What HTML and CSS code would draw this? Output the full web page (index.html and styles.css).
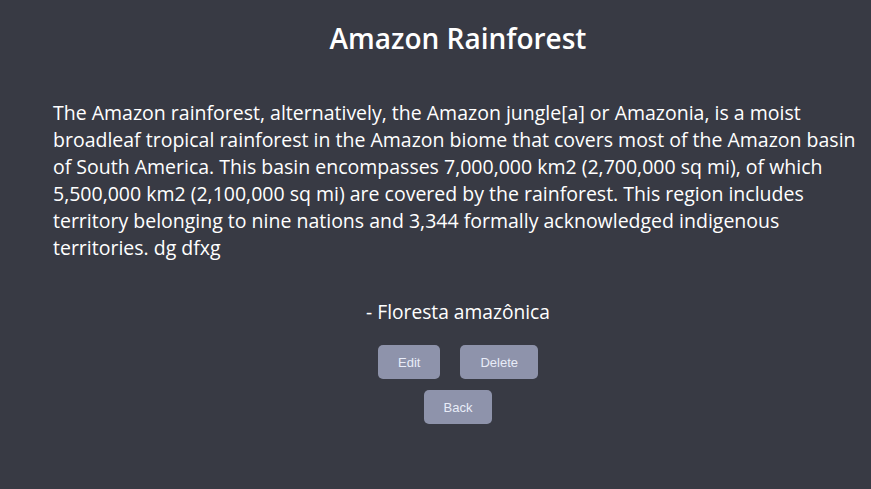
FILE: index.html
```html
<!DOCTYPE html>
<html lang="en">
<head>
<meta charset="utf-8">
<title>Amazon Rainforest</title>
<link rel="stylesheet" href="styles.css">
</head>
<body>
<main class="page">
  <h1 class="title">Amazon Rainforest</h1>
  <p class="content">The Amazon rainforest, alternatively, the Amazon jungle[a] or Amazonia, is a moist broadleaf tropical rainforest in the Amazon biome that covers most of the Amazon basin of South America. This basin encompasses 7,000,000 km2 (2,700,000 sq mi), of which 5,500,000 km2 (2,100,000 sq mi) are covered by the rainforest. This region includes territory belonging to nine nations and 3,344 formally acknowledged indigenous territories. dg dfxg</p>
  <p class="author">- Floresta amazônica</p>
  <div class="actions">
    <button class="btn">Edit</button>
    <button class="btn">Delete</button>
  </div>
  <div class="actions">
    <button class="btn">Back</button>
  </div>
</main>
</body>
</html>
```
FILE: styles.css
```css
html, body {
  margin: 0;
  padding: 0;
  background: #383a44;
}
body {
  font-family: "Open Sans", "DejaVu Sans", sans-serif;
  color: #ffffff;
}
.page {
  padding: 0 8px 0 53px;
  display: flex;
  flex-direction: column;
  align-items: center;
}
.title {
  margin: 20px 0 0;
  font-size: 28px;
  font-weight: 600;
  line-height: 36px;
}
.content {
  align-self: stretch;
  margin: 43px 0 0;
  font-size: 19.5px;
  line-height: 27px;
}
.author {
  margin: 39px 0 0;
  font-size: 19.2px;
  line-height: 24px;
}
.actions {
  display: flex;
  gap: 20px;
  margin-top: 10px;
}
.actions + .actions {
  margin-top: 11px;
}
.author + .actions {
  margin-top: 21px;
}
.btn {
  font-family: "Liberation Sans", Arial, sans-serif;
  font-size: 13px;
  color: #e8ecf8;
  background: #8e93ab;
  border: none;
  border-radius: 5px;
  height: 34px;
  padding: 0 20px;
}
```
